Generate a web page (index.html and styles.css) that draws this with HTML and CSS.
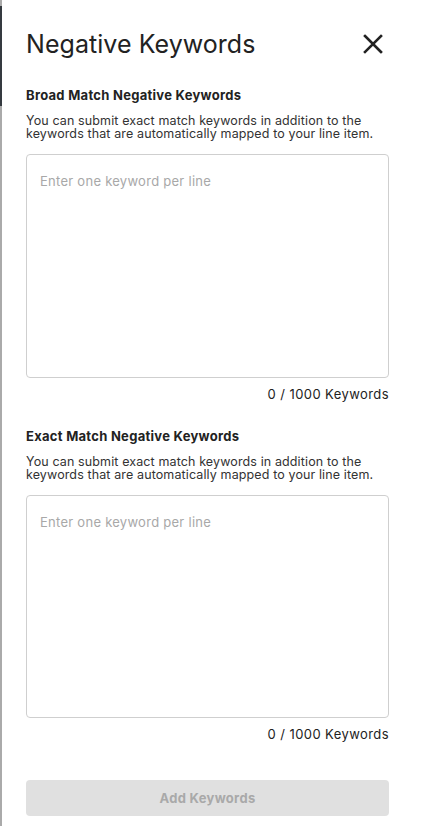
FILE: index.html
```html
<!DOCTYPE html>
<html>
<head>
<meta charset="utf-8">
<link rel="stylesheet" href="styles.css">
</head>
<body>
<div class="edge"><div class="edge-dark"></div></div>
<div class="panel">
  <div class="header">
    <h1 class="title">Negative Keywords</h1>
    <button class="close" aria-label="Close">
      <svg width="20" height="20" viewBox="0 0 20 20"><path d="M2 2L18 18M18 2L2 18" stroke="#222" stroke-width="2.6" stroke-linecap="square" fill="none"/></svg>
    </button>
  </div>

  <section class="block first">
    <h2 class="label">Broad Match Negative Keywords</h2>
    <p class="desc">You can submit exact match keywords in addition to the keywords that are automatically mapped to your line item.</p>
    <textarea class="box box-a" placeholder="Enter one keyword per line"></textarea>
    <div class="count">0 / 1000 Keywords</div>
  </section>

  <section class="block second">
    <h2 class="label">Exact Match Negative Keywords</h2>
    <p class="desc">You can submit exact match keywords in addition to the keywords that are automatically mapped to your line item.</p>
    <textarea class="box box-b" placeholder="Enter one keyword per line"></textarea>
    <div class="count">0 / 1000 Keywords</div>
  </section>

  <button class="add" disabled>Add Keywords</button>
</div>
</body>
</html>
```

FILE: styles.css
```css
html, body {
  margin: 0;
  padding: 0;
  background: #fff;
}
body {
  font-family: Inter, "Noto Sans", "Liberation Sans", sans-serif;
  color: #222;
  width: 424px;
  height: 826px;
  overflow: hidden;
  position: relative;
}
.edge {
  position: absolute;
  left: 0;
  top: 0;
  bottom: 0;
  width: 2px;
  background: #aaaaaa;
}
.edge-dark {
  margin-top: 6px;
  height: 100px;
  background: #353a40;
}
.panel {
  padding: 0 35px 0 26px;
  display: flex;
  flex-direction: column;
}
.header {
  margin-top: 29px;
  height: 30px;
  display: flex;
  align-items: center;
  justify-content: space-between;
}
.title {
  margin: 0;
  font-size: 25px;
  font-weight: 400;
  line-height: 30px;
  color: #222;
  letter-spacing: 0.05px;
}
.close {
  border: 0;
  background: none;
  padding: 0;
  margin-right: 6px;
  width: 20px;
  height: 20px;
  display: flex;
}
.block {
  display: flex;
  flex-direction: column;
}
.first { margin-top: 28px; }
.second { margin-top: 26px; }
.label {
  margin: 0;
  font-size: 13px;
  font-weight: 700;
  line-height: 16px;
  color: #222;
  letter-spacing: 0.28px;
}
.desc {
  margin: 11px 0 0;
  font-size: 12.5px;
  line-height: 13px;
  color: #333;
  letter-spacing: 0.12px;
}
.box {
  margin-top: 14px;
  box-sizing: border-box;
  width: 100%;
  border: 1px solid #cfcfcf;
  border-radius: 4px;
  padding: 18px 13px;
  font-family: inherit;
  font-size: 13px;
  line-height: 16px;
  letter-spacing: 0.27px;
  resize: none;
  outline: none;
}
.box::placeholder { color: #a8a8a8; }
.box-a { height: 224px; }
.box-b { height: 223px; }
.count {
  margin-top: 8px;
  text-align: right;
  font-size: 13px;
  line-height: 16px;
  color: #222;
  letter-spacing: 0.42px;
}
.add {
  margin-top: 38px;
  height: 36px;
  border: 0;
  border-radius: 4px;
  background: #e0e0e0;
  color: #a9a9a9;
  font-family: inherit;
  font-size: 13px;
  font-weight: 700;
  letter-spacing: 0.3px;
}
```
